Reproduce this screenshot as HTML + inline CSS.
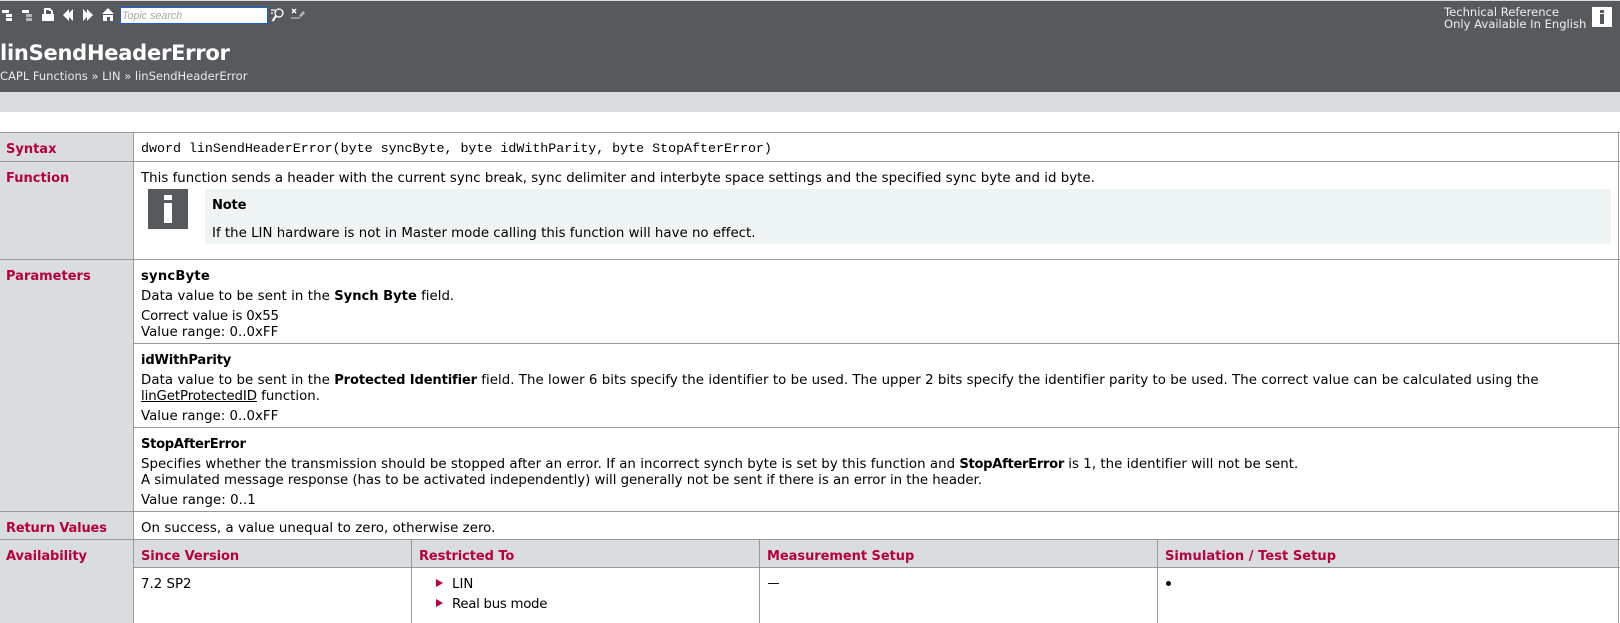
<!DOCTYPE html>
<html><head><meta charset="utf-8"><style>
html,body{margin:0;padding:0;background:#fff}
body{width:1620px;height:623px;overflow:hidden;position:relative;font-family:"DejaVu Sans","Liberation Sans",sans-serif;font-size:13.33px;letter-spacing:.015px;color:#000}
.r{position:absolute;display:block}
.t{position:absolute;white-space:nowrap;line-height:16px;height:16px}
.h{color:#b8003a;font-weight:bold;font-size:13px;letter-spacing:0}
b{font-weight:bold;color:#000;font-size:13.1px;letter-spacing:0}
.l{position:absolute;background:#999}
</style></head><body>
<div class="r" style="left:0;top:0;width:1620px;height:1px;background:#d8dadc"></div>
<div class="r" style="left:0;top:1px;width:1620px;height:91px;background:#565a5d"></div>
<div class="r" style="left:0;top:92px;width:1620px;height:20px;background:#dadde0"></div>

<svg class="r" style="left:0;top:0" width="320" height="30" viewBox="0 0 320 30">
<g fill="#fff">
<rect x="2" y="10" width="7" height="3"/><rect x="6" y="14" width="6" height="3"/><rect x="6" y="18" width="6" height="3"/>
<rect x="22" y="10" width="7" height="3"/><rect x="26" y="14" width="6" height="3" fill="#b4b7b9"/><rect x="26" y="18" width="6" height="3" fill="#b4b7b9"/>
<path d="M44 8h6l3 3v3h1v7H42v-7h2zM46 10v4h5v-3h-2v-1z" fill-rule="evenodd"/>
<path d="M69 9v4l4-4v12l-4-4v4l-6-6z"/>
<path d="M87 9v4l-4-4v12l4-4v4l6-6z"/>
<path d="M108 8l6 6h-12z"/><path d="M103 15h10v6h-3v-4h-3v4h-4z"/>
</g>
<rect x="120.5" y="7.5" width="147" height="16" fill="#fff" stroke="#1a5fd6"/>
<g fill="none" stroke="#fff" stroke-width="1.3">
<circle cx="279" cy="13" r="4"/><path d="M276 16l-3.500 5" stroke-width="2"/><path d="M271 10h4M271 13h2"/>
<path d="M292 9l4 4M296 9l-4 4" stroke-width="1.500"/><path d="M291 18h9" stroke="#b4b7b9"/>
</g>
<path d="M299 16l4-5 2 2-4 4z" fill="#b4b7b9"/>
</svg>
<div class="t" style="left:122px;top:9px;font:italic 10.700px/15px 'Liberation Sans',sans-serif;color:#a8a8a8;letter-spacing:0">Topic search</div>

<div class="t" style="left:0;top:39px;height:28px;line-height:28px;font-size:21px;letter-spacing:-.25px;font-weight:bold;color:#fff">linSendHeaderError</div>
<div class="t" style="left:0;top:68px;font-size:11.500px;letter-spacing:0;color:#e8eaeb">CAPL Functions » LIN » linSendHeaderError</div>
<div class="t" style="left:1444px;top:6px;font-size:11.570px;letter-spacing:0;line-height:12px;color:#eee">Technical Reference</div>
<div class="t" style="left:1444px;top:18px;font-size:11.570px;letter-spacing:0;line-height:12px;color:#eee">Only Available In English</div>
<div class="r" style="left:1592px;top:7px;width:20px;height:20px;background:#fff"></div>
<div class="r" style="left:1600px;top:10px;width:4px;height:3px;background:#565a5d"></div>
<div class="r" style="left:1600px;top:14px;width:4px;height:10px;background:#565a5d"></div>

<div class="r" style="left:0;top:132px;width:133px;height:491px;background:#dadde0"></div>
<div class="r" style="left:134px;top:540px;width:1484px;height:27px;background:#dadde0"></div>
<div class="r" style="left:205px;top:189px;width:1406px;height:55px;background:#eff5f5"></div>
<div class="r" style="left:148px;top:189px;width:40px;height:40px;background:#565a5d"></div>
<div class="r" style="left:164px;top:195px;width:8px;height:5px;background:#fff"></div>
<div class="r" style="left:164px;top:203px;width:8px;height:20px;background:#fff"></div>

<div class="l" style="left:0;top:132px;width:1620px;height:1px"></div>
<div class="l" style="left:0;top:161px;width:1620px;height:1px"></div>
<div class="l" style="left:0;top:259px;width:1620px;height:1px"></div>
<div class="l" style="left:134px;top:343px;width:1486px;height:1px"></div>
<div class="l" style="left:134px;top:427px;width:1486px;height:1px"></div>
<div class="l" style="left:0;top:511px;width:1620px;height:1px"></div>
<div class="l" style="left:0;top:539px;width:1620px;height:1px"></div>
<div class="l" style="left:134px;top:567px;width:1486px;height:1px"></div>
<div class="l" style="left:133px;top:132px;width:1px;height:491px"></div>
<div class="l" style="left:411px;top:539px;width:1px;height:84px"></div>
<div class="l" style="left:759px;top:539px;width:1px;height:84px"></div>
<div class="l" style="left:1157px;top:539px;width:1px;height:84px"></div>
<div class="l" style="left:1618px;top:132px;width:1px;height:491px"></div>

<div class="t h" style="left:6px;top:142px">Syntax</div>
<div class="t h" style="left:6px;top:171px">Function</div>
<div class="t h" style="left:6px;top:269px">Parameters</div>
<div class="t h" style="left:6px;top:521px;letter-spacing:-.16px">Return Values</div>
<div class="t h" style="left:6px;top:549px;letter-spacing:-.08px">Availability</div>

<div class="t" style="left:141px;top:142px;font-family:'Liberation Mono',monospace;font-size:13.330px;letter-spacing:-.012px">dword linSendHeaderError(byte syncByte, byte idWithParity, byte StopAfterError)</div>
<div class="t" style="left:141px;top:171px;letter-spacing:.022px">This function sends a header with the current sync break, sync delimiter and interbyte space settings and the specified sync byte and id byte.</div>
<div class="t" style="left:212px;top:198px"><b style="letter-spacing:-.2px">Note</b></div>
<div class="t" style="left:212px;top:226px">If the LIN hardware is not in Master mode calling this function will have no effect.</div>

<div class="t" style="left:141px;top:269px"><b style="letter-spacing:.25px">syncByte</b></div>
<div class="t" style="left:141px;top:289px"><span style="letter-spacing:.085px">Data value to be sent in the </span><b>Synch Byte</b> field.</div>
<div class="t" style="left:141px;top:309px;letter-spacing:-.185px">Correct value is 0x55</div>
<div class="t" style="left:141px;top:325px">Value range: 0..0xFF</div>

<div class="t" style="left:141px;top:353px"><b style="letter-spacing:-.17px">idWithParity</b></div>
<div class="t" style="left:141px;top:373px;letter-spacing:.042px"><span style="letter-spacing:.085px">Data value to be sent in the </span><b style="letter-spacing:-.15px">Protected Identifier</b> field. The lower 6 bits specify the identifier to be used. The upper 2 bits specify the identifier parity to be used. The correct value can be calculated using the</div>
<div class="t" style="left:141px;top:389px"><u style="letter-spacing:-.1px">linGetProtectedID</u> function.</div>
<div class="t" style="left:141px;top:409px">Value range: 0..0xFF</div>

<div class="t" style="left:141px;top:437px"><b style="letter-spacing:-.3px">StopAfterError</b></div>
<div class="t" style="left:141px;top:457px;letter-spacing:.045px">Specifies whether the transmission should be stopped after an error. If an incorrect synch byte is set by this function and <b style="letter-spacing:-.3px">StopAfterError</b> is 1, the identifier will not be sent.</div>
<div class="t" style="left:141px;top:473px;letter-spacing:-.034px">A simulated message response (has to be activated independently) will generally not be sent if there is an error in the header.</div>
<div class="t" style="left:141px;top:493px;letter-spacing:.06px">Value range: 0..1</div>

<div class="t" style="left:141px;top:521px;letter-spacing:.055px">On success, a value unequal to zero, otherwise zero.</div>

<div class="t h" style="left:141px;top:549px;letter-spacing:-.08px">Since Version</div>
<div class="t h" style="left:419px;top:549px;letter-spacing:-.08px">Restricted To</div>
<div class="t h" style="left:767px;top:549px;letter-spacing:-.05px">Measurement Setup</div>
<div class="t h" style="left:1165px;top:549px;letter-spacing:.05px">Simulation / Test Setup</div>

<div class="t" style="left:141px;top:577px">7.2 SP2</div>
<svg class="r" style="left:435px;top:578px" width="10" height="36"><path d="M1 1l7 4-7 4zM1 21l7 4-7 4z" fill="#b8003a"/></svg>
<div class="t" style="left:452px;top:577px">LIN</div>
<div class="t" style="left:452px;top:597px;letter-spacing:-.285px">Real bus mode</div>
<div class="r" style="left:768px;top:583px;width:11px;height:1px;background:#111"></div>
<div class="r" style="left:1166px;top:581px;width:5px;height:5px;border-radius:50%;background:#111"></div>
</body></html>
